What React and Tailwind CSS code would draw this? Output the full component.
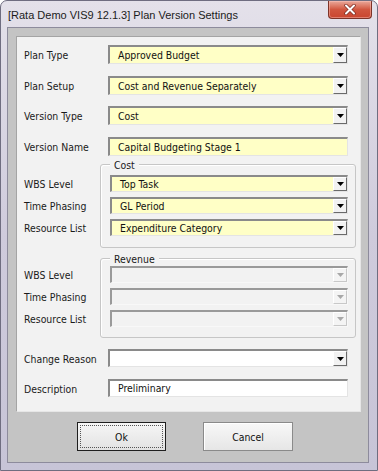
import React from "react";

const FONT = { fontFamily: '"DejaVu Sans Condensed", "DejaVu Sans", sans-serif' };

function Arrow({ disabled }) {
  return (
    <svg width="7" height="4" viewBox="0 0 7 4">
      <polygon points="0,0 7,0 3.5,4" fill={disabled ? "#a8a8a8" : "#000"} />
    </svg>
  );
}

function Select({ value, wide, disabled, h }) {
  return (
    <div
      className={
        "flex items-stretch border-t-2 border-l-2 border-b border-r box-border " +
        (disabled
          ? "bg-[#f2f2f2] border-t-[#9a9a9a] border-l-[#9a9a9a] border-b-[#f8f8f8] border-r-[#f8f8f8] "
          : "bg-[#ffffc6] border-t-[#8a8a8a] border-l-[#8a8a8a] border-b-[#e4e4e4] border-r-[#e4e4e4] ") +
        (wide === 238 ? "w-[238px] " : "w-[240px] ") +
        (h === 17 ? "h-[17px]" : "h-[19px]")
      }
    >
      <div className="flex-1 flex items-center pl-[8px] text-[10.4px] text-[#111] leading-none whitespace-nowrap overflow-hidden">
        {value}
      </div>
      <div
        className={
          "w-[14px] flex items-center justify-center border-t border-l border-b border-r " +
          (disabled
            ? "bg-[#f4f4f4] border-t-white border-l-white border-b-[#c8c8c8] border-r-[#c8c8c8]"
            : "bg-[#f2f2f2] border-t-white border-l-white border-b-[#6a6a6a] border-r-[#6a6a6a]")
        }
      >
        <Arrow disabled={disabled} />
      </div>
    </div>
  );
}

function TextBox({ value }) {
  return (
    <div className="w-[240px] h-[19px] flex items-center pl-[8px] text-[10.4px] text-[#111] leading-none border-t-2 border-l-2 border-b border-r border-t-[#8a8a8a] border-l-[#8a8a8a] border-b-[#e4e4e4] border-r-[#e4e4e4] bg-[#ffffc6]">
      {value}
    </div>
  );
}

function Row({ label, children, mt }) {
  return (
    <div className={"flex items-center " + mt}>
      <div className="w-[84px] text-[10.4px] text-[#1a1a1a] leading-none pt-[2px]">{label}</div>
      {children}
    </div>
  );
}

function Group({ title, rows, disabled, mt, h, pt }) {
  return (
    <div className={"flex " + mt}>
      <div className={"w-[76px] flex flex-col gap-[5px] " + (pt === 11 ? "pt-[11px]" : "pt-[8px]")}>
        {rows.map((r) => (
          <div key={r[0]} className="h-[17px] flex items-center text-[10.4px] text-[#1a1a1a] leading-none pt-[2px]">
            {r[0]}
          </div>
        ))}
      </div>
      <div
        className={
          "relative w-[256px] border border-[#c6c6c6] rounded-[3px] shadow-[inset_1px_1px_0_#ffffff] flex flex-col gap-[5px] pl-[9px] " +
          (h === 84 ? "h-[84px] pt-[10px]" : "h-[80px] pt-[7px]")
        }
      >
        <div className="absolute left-[9px] top-[-7px] px-[4px] bg-[#f2f2f2] text-[10.4px] text-[#1a1a1a] leading-none pt-[2px]">
          {title}
        </div>
        {rows.map((r) => (
          <Select key={r[0]} value={r[1]} wide={238} h={17} disabled={disabled} />
        ))}
      </div>
    </div>
  );
}

export default function App() {
  return (
    <div
      className="w-[378px] h-[471px] box-border border border-[#6f6d80] rounded-t-[7px] bg-gradient-to-b from-[#e4e1ea] via-[#cfcbdc] to-[#c7c4d7] flex flex-col overflow-hidden"
      style={FONT}
    >
      {/* Title bar */}
      <div className="h-[26px] flex items-start">
        <div
          className="pl-[7px] pt-[9px] text-[11px] text-[#1b1b1b] leading-none whitespace-nowrap"
          style={{ fontFamily: '"Liberation Sans", Arial, sans-serif' }}
        >
          [Rata Demo VIS9 12.1.3] Plan Version Settings
        </div>
        <div className="ml-auto mr-[5px] w-[44px] h-[18px] rounded-b-[4px] border border-t-0 border-[#7d3328] bg-gradient-to-b from-[#e9a89a] via-[#d1563f] to-[#c9452f] shadow-[inset_0_0_0_1px_rgba(255,200,190,0.45)] flex items-center justify-center">
          <svg width="12" height="11" viewBox="0 0 12 11">
            <path d="M2 1.5 L10 9.5 M10 1.5 L2 9.5" stroke="#7a2a20" strokeWidth="3.4" strokeLinecap="round" />
            <path d="M2 1.5 L10 9.5 M10 1.5 L2 9.5" stroke="#ffffff" strokeWidth="2" strokeLinecap="round" />
          </svg>
        </div>
      </div>

      {/* Client area */}
      <div className="ml-[6px] mr-[8px] mb-[7px] flex-1 border border-[#8d8b9c] bg-[#c4c4c4] flex flex-col pl-[8px] pr-[6px] pt-[8px]">
        <div className="w-[345px] h-[376px] box-border border border-t-[#a4a4a4] border-l-[#a4a4a4] border-b-[#e6e6e6] border-r-[#e6e6e6] bg-[#f2f2f2] flex flex-col pt-[8px] pl-[7px]">
          <Row label="Plan Type" mt="mt-0">
            <Select value="Approved Budget" />
          </Row>
          <Row label="Plan Setup" mt="mt-[12px]">
            <Select value="Cost and Revenue Separately" />
          </Row>
          <Row label="Version Type" mt="mt-[11px]">
            <Select value="Cost" />
          </Row>
          <Row label="Version Name" mt="mt-[12px]">
            <TextBox value="Capital Budgeting Stage 1" />
          </Row>

          <Group
            title="Cost"
            mt="mt-[8px]"
            h={84}
            pt={11}
            rows={[
              ["WBS Level", "Top Task"],
              ["Time Phasing", "GL Period"],
              ["Resource List", "Expenditure Category"],
            ]}
          />
          <Group
            title="Revenue"
            mt="mt-[10px]"
            h={80}
            pt={8}
            disabled
            rows={[
              ["WBS Level", ""],
              ["Time Phasing", ""],
              ["Resource List", ""],
            ]}
          />

          <div className="flex items-center mt-[11px]">
            <div className="w-[84px] text-[10.4px] text-[#1a1a1a] leading-none pt-[2px]">Change Reason</div>
            <div className="w-[240px] h-[18px] flex items-stretch bg-white border-t-2 border-l-2 border-b border-r border-t-[#8a8a8a] border-l-[#8a8a8a] border-b-[#e4e4e4] border-r-[#e4e4e4]">
              <div className="flex-1" />
              <div className="w-[14px] flex items-center justify-center bg-[#f2f2f2] border border-t-white border-l-white border-b-[#6a6a6a] border-r-[#6a6a6a]">
                <Arrow />
              </div>
            </div>
          </div>
          <div className="flex items-center mt-[12px]">
            <div className="w-[84px] text-[10.4px] text-[#1a1a1a] leading-none pt-[2px]">Description</div>
            <div className="w-[240px] h-[18px] flex items-center pl-[8px] text-[10.4px] text-[#111] leading-none bg-white border-t-2 border-l-2 border-b border-r border-t-[#8a8a8a] border-l-[#8a8a8a] border-b-[#e4e4e4] border-r-[#e4e4e4]">
              Preliminary
            </div>
          </div>
        </div>

        {/* Buttons */}
        <div className="flex mt-[10px]">
          <div className="ml-[61px] w-[89px] h-[29px] border border-[#1e1e1e] bg-gradient-to-b from-[#f6f6f6] to-[#e2e2e2] p-[2px]">
            <div className="w-full h-full border border-dotted border-[#555] flex items-center justify-center text-[10.4px] text-[#111] leading-none pt-[1px]">
              Ok
            </div>
          </div>
          <div className="ml-[37px] w-[90px] h-[29px] border border-[#8a8a8a] bg-gradient-to-b from-[#f8f8f8] to-[#e6e6e6] shadow-[inset_1px_1px_0_#ffffff] flex items-center justify-center text-[10.4px] text-[#111] leading-none pt-[1px]">
            Cancel
          </div>
        </div>
      </div>
    </div>
  );
}
